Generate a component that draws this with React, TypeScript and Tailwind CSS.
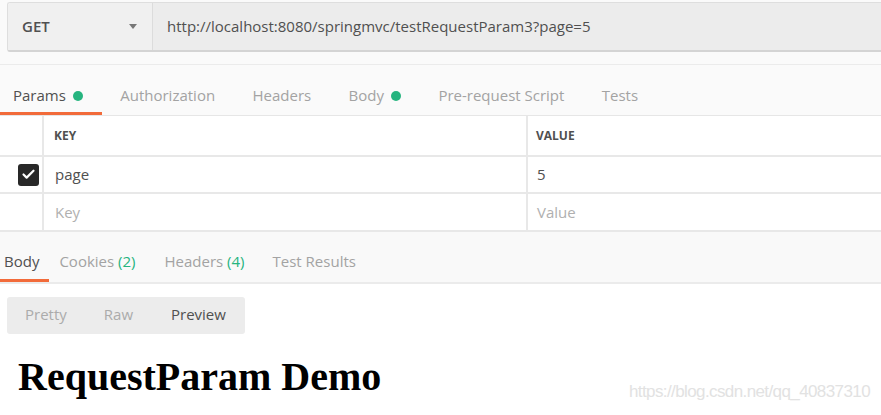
import { Check } from "lucide-react";

const tabs = [
  { label: "Params", dot: true, active: true },
  { label: "Authorization" },
  { label: "Headers" },
  { label: "Body", dot: true },
  { label: "Pre-request Script" },
  { label: "Tests" },
];

const responseTabs = [
  { label: "Body", active: true, cls: "pl-[4px] pr-[10px]" },
  { label: "Cookies", count: 2, cls: "px-[10px]" },
  { label: "Headers", count: 4, cls: "px-[10px] ml-[9px]" },
  { label: "Test Results", cls: "px-[10px] ml-[8px]" },
];

export default function App() {
  return (
    <div className="relative w-[881px] h-[415px] overflow-hidden bg-white font-['Open_Sans',sans-serif] text-[15px] text-[#505050]">
      {/* request bar */}
      <div className="h-[65px] bg-[#fafafa] border-b border-[#ebebeb] pt-[2px] pl-[7px]">
        <div className="flex h-[50px] border border-[#dedede] border-b-2 border-b-[#d4d4d4] border-r-0 rounded-l-[3px] overflow-hidden">
          <div className="w-[145px] shrink-0 flex items-center justify-between pl-[14px] pr-[15px] bg-[#f0f0f0] border-r border-[#dcdcdc]">
            <span className="font-semibold">GET</span>
            <span className="w-0 h-0 border-l-[4px] border-r-[4px] border-t-[5px] border-l-transparent border-r-transparent border-t-[#777]" />
          </div>
          <div className="flex-1 flex items-center pl-[14px] bg-[#ececec]">
            http://localhost:8080/springmvc/testRequestParam3?page=5
          </div>
        </div>
      </div>

      {/* request tabs */}
      <div className="h-[51px] bg-[#fafafa] border-b border-[#e6e6e6] flex items-end">
        {tabs.map((t, i) => (
          <div
            key={t.label}
            className={`h-[50px] flex items-center pr-[18.7px] border-b-[3px] ${i === 0 ? "pl-[13px]" : "pl-[18.7px]"} ${t.active ? "border-[#f26b3a] text-[#505050]" : "border-transparent text-[#a3a3a3]"}`}
          >
            <span className="mt-[14px]">{t.label}</span>
            {t.dot && <span className="ml-[7px] mt-[14px] w-[10px] h-[10px] rounded-full bg-[#26b47f]" />}
          </div>
        ))}
      </div>

      {/* params table */}
      <div className="bg-white">
        <div className="flex h-[41px] border-b-2 border-[#e8e8e8]">
          <div className="w-[44px] border-r-2 border-[#e8e8e8]" />
          <div className="w-[484px] border-r-2 border-[#e8e8e8] flex items-center pl-[10px] text-[12px] font-bold text-[#505050]">KEY</div>
          <div className="flex-1 flex items-center pl-[8px] text-[12px] font-bold text-[#505050]">VALUE</div>
        </div>
        <div className="flex h-[37px] border-b-2 border-[#e8e8e8]">
          <div className="w-[44px] border-r-2 border-[#e8e8e8] flex items-center justify-end pr-[3px]">
            <span className="w-[21px] h-[22px] rounded-[3px] bg-[#282828] flex items-center justify-center">
              <Check size={15} strokeWidth={3.5} className="text-white" />
            </span>
          </div>
          <div className="w-[484px] border-r-2 border-[#e8e8e8] flex items-center pl-[11px]">page</div>
          <div className="flex-1 flex items-center pl-[9px]">5</div>
        </div>
        <div className="flex h-[38px] border-b-2 border-[#e8e8e8] text-[#b0b0b0]">
          <div className="w-[44px] border-r-2 border-[#e8e8e8]" />
          <div className="w-[484px] border-r-2 border-[#e8e8e8] flex items-center pl-[11px]">Key</div>
          <div className="flex-1 flex items-center pl-[9px]">Value</div>
        </div>
      </div>

      {/* response tabs */}
      <div className="h-[52px] bg-[#f9f9f9] border-b-2 border-[#ebebeb] flex items-end">
        {responseTabs.map((t) => (
          <div
            key={t.label}
            className={`h-[50px] flex items-center border-b-[3px] ${t.cls} ${t.active ? "border-[#f26b3a] text-[#505050]" : "border-transparent text-[#a3a3a3]"}`}
          >
            <span className="mt-[12px]">
              {t.label}
              {t.count !== undefined && <span className="text-[#26b47f]"> ({t.count})</span>}
            </span>
          </div>
        ))}
      </div>

      {/* view mode */}
      <div className="pl-[7px] pt-[13px]">
        <div className="inline-flex h-[37px] items-center rounded-[3px] bg-[#ececec] pl-[18px] pr-[19px] gap-[37px]">
          <span className="text-[#ababab] mt-[-2px]">Pretty</span>
          <span className="text-[#ababab] mt-[-2px]">Raw</span>
          <span className="text-[#505050] ml-[1px] mt-[-2px]">Preview</span>
        </div>
      </div>

      <h1 className="mt-[23px] pl-[18px] font-['Liberation_Serif',serif] font-bold text-[40px] leading-[40px] text-black">
        RequestParam Demo
      </h1>

      <div className="absolute right-[11px] bottom-[11px] font-['Liberation_Sans',sans-serif] text-[17px] tracking-[-0.6px] text-[#e2e2e2]">
        https://blog.csdn.net/qq_40837310
      </div>
    </div>
  );
}
